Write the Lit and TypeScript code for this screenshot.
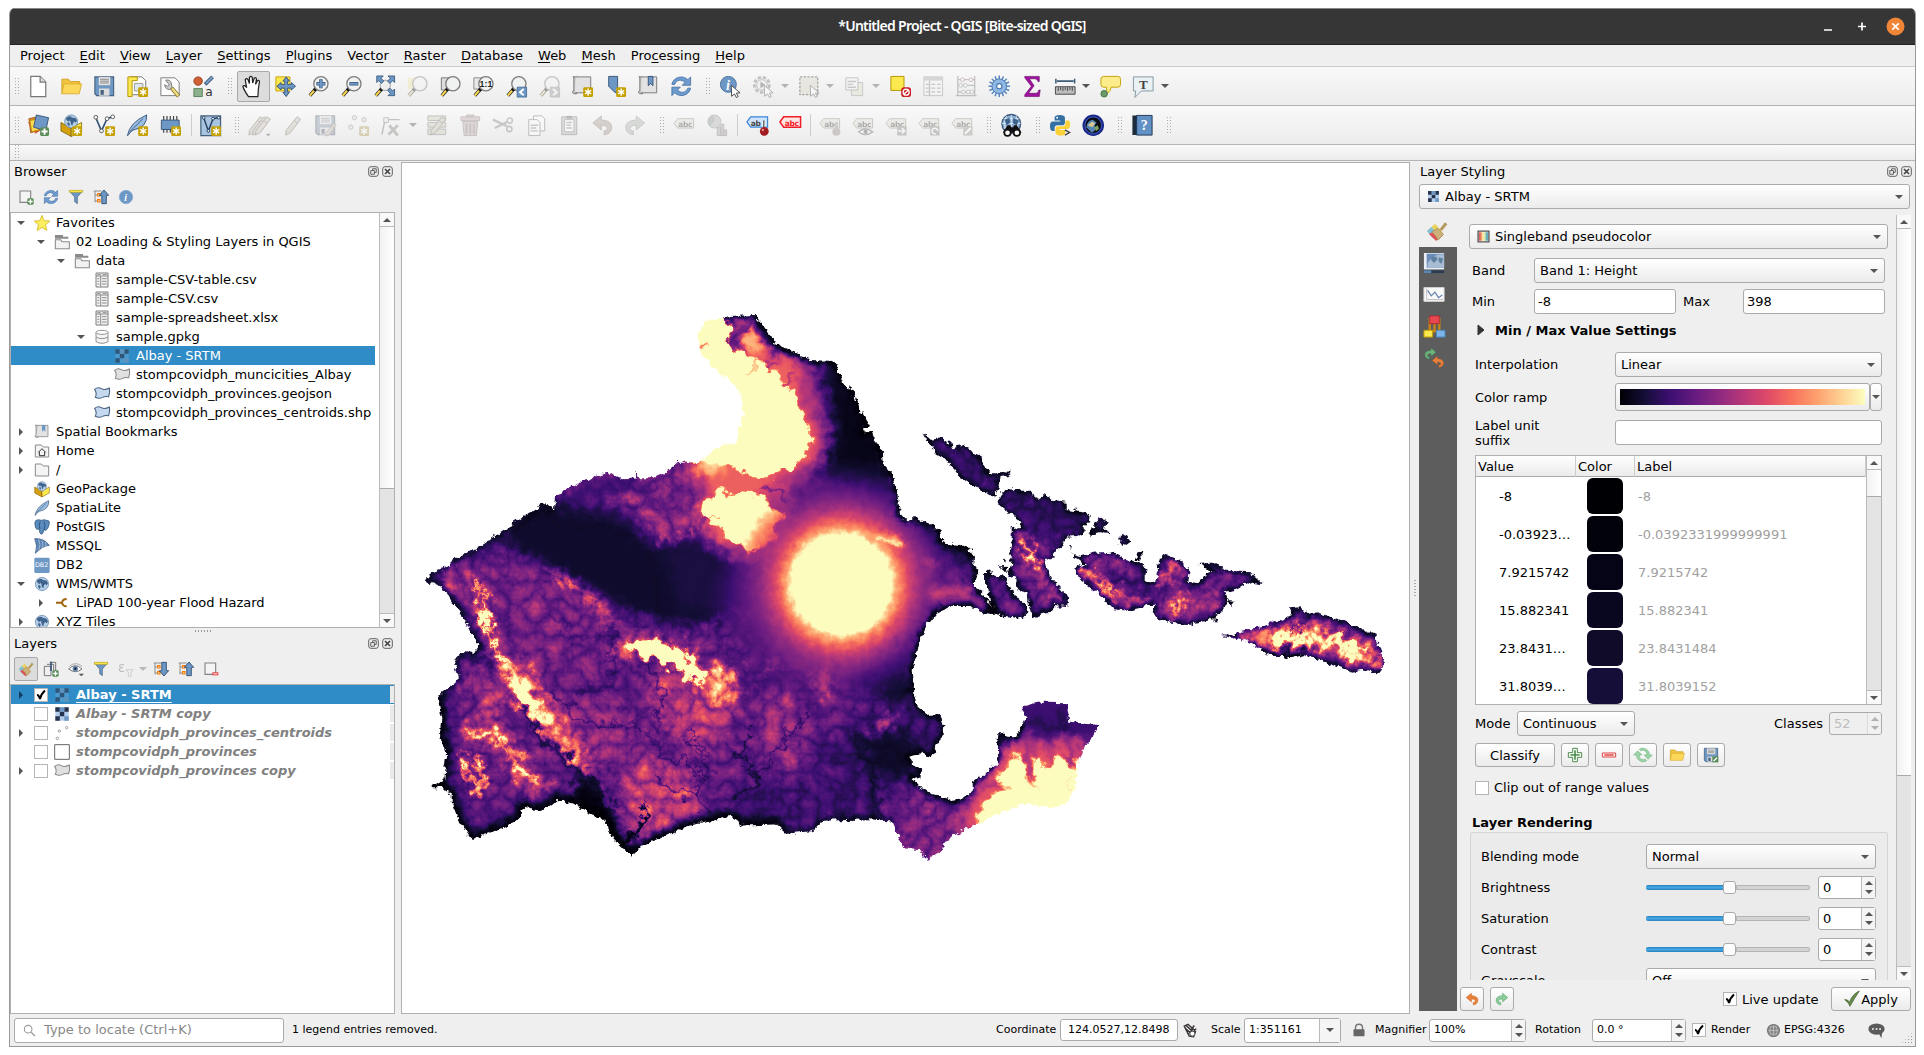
import { LitElement, html, svg, css, nothing } from "lit";
import { customElement, property } from "lit/decorators.js";

/* ---------- icons, all on a 24 unit grid ---------- */
const star = svg`<rect x="13" y="13" width="10.500" height="10.500" rx="1.500" fill="#c4a000"/><path d="M18.300 14.500v7.600M15 16.400l6.600 3.800M21.600 16.400L15 20.200" stroke="#fff" stroke-width="1.500"/>`;
const plus = svg`<rect x="14" y="14" width="9.500" height="9.500" rx="2" fill="#5a8c5a"/><path d="M18.700 15.500v6.500M15.500 18.700h6.500" stroke="#fff" stroke-width="2"/>`;
const handleYellow = svg`<path d="M9.500 14.500L3 22" stroke="#222" stroke-width="3.600"/><path d="M7.500 16.600L3 22" stroke="#fcd94f" stroke-width="2.200"/><path d="M10 14l-2 2.300" stroke="#111" stroke-width="3.600"/>`;
const lens = svg`${handleYellow}<circle cx="14.800" cy="9.300" r="7.600" fill="#f0f2f2" stroke="#7d7d7d" stroke-width="1.400"/>`;
const tag = svg`<path d="M1 10l4-5h17v10H5z" fill="#e4e0c8" stroke="#8a8668"/><text x="5.500" y="13.400" class="t9">abc</text>`;
const globe = svg`<circle cx="12" cy="12" r="10" fill="#b4cde6" stroke="#6484a8"/><path d="M5 6l4-2 4 1-1 3-3 1v3l-3-1-2-3zM14 6l5 1 2 4-2 3-2-2-2 2-1 4-2-1-1-5-2-2 1-2zM7 13l3 2-1 5-3-4z" fill="#3e638c"/>`;
const raster = (a: string, b: string, c: string) => svg`<path d="M2 2h20v20H2z" fill="${c}"/><path d="M2 2h6.700v6.700H2zM15.400 2H22v6.700h-6.600zM8.700 8.700h6.700v6.700H8.700zM2 15.400h6.700V22H2z" fill="${a}"/><path d="M8.700 2h6.700v6.700H8.700zM15.400 15.400H22V22h-6.600z" fill="${b}"/>`;
const refresh = (c: string, s: string) => svg`<path d="M2 10C3 3 13-1 19 5l3-3v9h-9l3-3C12 4 7 5 5 10z" fill="${c}" stroke="${s}" stroke-width=".8"/><path d="M22 14c-1 7-11 11-17 5l-3 3v-9h9l-3 3c4 4 9 3 11-2z" fill="${c}" stroke="${s}" stroke-width=".8"/>`;
const undo = (c: string, s: string) => svg`<path d="M2 9.500L11 2v4.500c8 0 12 4 11 9-.6 4-4 6.500-8 6.500v-4c5 0 5.500-6-3-6V17z" fill="${c}" stroke="${s}" stroke-width=".8"/>`;
const redo = (c: string, s: string) => svg`<g transform="matrix(-1 0 0 1 24 0)">${undo(c, s)}</g>`;
const disk = svg`<path d="M2 2h20v20H4l-2-2z" fill="#6d97c4" stroke="#46607d" stroke-width="1.200"/><path d="M6 2h12.500v9H6z" fill="#eee" stroke="#8795a5" stroke-width=".6"/><path d="M7.500 4.500h9.500M7.500 6.500h9.500M7.500 8.500h9.500" stroke="#777"/><path d="M6.500 14.500h11V22h-11z" fill="#ddd"/><path d="M8 16h3.500v5H8z" fill="#46607d"/>`;
const book = svg`<path d="M2 2h4v18H3.500C1 20 1 17 3 17V2z" fill="#c4c4c4" stroke="#777"/><path d="M5 2h16v17H4" fill="#e2e2e2" stroke="#777"/>`;
const folder = svg`<path d="M2 20V4.500h7l2 2.500h10v4" fill="#f0c440" stroke="#d4a020"/><path d="M2 20L4 9.500h19L20.500 20z" fill="#fcd85a" stroke="#dcae30"/>`;
const sheet = svg`<path d="M3 1.500h18v21H3z" fill="#f3f3f3" stroke="#7c7c7c" stroke-width="1.500"/><path d="M3 6h18M10 6v16M5 10h3M5 14h3M5 18h3M12 10h7M12 14h7M12 18h7M5 4h5M13 4h6" stroke="#7c7c7c" stroke-width="1.300"/>`;
const cursor = svg`<path d="M13 11l9.500 8-4 .3 2 3.700-2 1-2-3.800-3 2.500z" fill="#fff" stroke="#444"/>`;
const pencil = svg`<path d="M17 3l4 2.500L10 20l-5 2.500.5-5z" fill="#d8bfa4" stroke="#7a6a5a"/><path d="M14 7l4 3" stroke="#7a6a5a"/>`;
const funnel = svg`<path d="M2 3h20l-8 9v10l-4-3v-7z" fill="#6d97c4" stroke="#46607d"/><path d="M2 2h20v3H2z" fill="#fce94f" stroke="#c4a000" stroke-width=".8"/>`;
const poly = (a: string, s: string) => svg`<path d="M1 5q5-4 10-1t12-1q1.500 6-1 13-6-1-9 1-5 3-11 0 3-6-1-12z" fill="${a}" stroke="${s}" stroke-width="1.600"/>`;
const treeUp = (down: boolean) => svg`<path d="M3 3v17M3 9h4M3 18h4M1 3h12" stroke="#888" stroke-width="1.400" fill="none"/><path d="M7 7h3.500v3.500H7zM7 16h3.500v3.500H7z" fill="#fff" stroke="#f57900" stroke-width="1.800"/><path transform="${down ? "matrix(1 0 0 -1 0 24)" : ""}" d="M16.500 1.500l7 8h-3.500V22h-6.800V9.500H9.500z" fill="#6d97c4" stroke="#2c4a6e" stroke-width="1.300"/>`;
const brush = svg`<path d="M1 12L10 4l9 11-7 7z" fill="#e9d15c"/><path d="M1 12l5-4.500 5 6-3 7z" fill="#7fc3e0"/><path d="M3 15l6-2 5 6-3 4z" fill="#e05058"/><path d="M6 13l7-4 6 7-6 6q-2-5-7-9z" fill="#cdb07a" stroke="#9a7c48" stroke-width=".7"/><path d="M16 11l6-7.500" stroke="#b59a60" stroke-width="3.300"/>`;

const I: Record<string, unknown> = {
  none: nothing,
  doc: svg`<path d="M4 1.500h10L20 7.500v15.500H4z" fill="#fff" stroke="#777" stroke-width="1.300"/><path d="M14 1.500v6h6" fill="#ddd" stroke="#777" stroke-width="1.300"/>`,
  folder, disk, sheet, funnel, brush,
  layout: svg`<path d="M4 2h13l4 4v15H4z" fill="#fff" stroke="#777"/><path d="M2 2h10v4H6.500v17H2z" fill="#fce94f" stroke="#b39200"/><path d="M9 9h9v8H9z" fill="#dfe7ee" stroke="#999"/>${star}`,
  manager: svg`<path d="M2 3h15l4.500 4.500V22H2z" fill="#fff" stroke="#777"/><path d="M7 5.500q5-1 6 3l1 5-3 2q-4 0-5-5l3 1.500 2-1.500z" fill="#ccc" stroke="#777"/><path d="M13.500 14l7.500 8.500" stroke="#8a7430" stroke-width="4.200"/><path d="M14 14.500l6.500 7.500" stroke="#f0e080" stroke-width="2.500"/>`,
  stylemgr: svg`<circle cx="6.500" cy="6.500" r="4.500" fill="#cf5f35" stroke="#9a3f1c"/><path d="M2 14.500h9V23H2z" fill="#8bb08b" stroke="#5a805a"/><path d="M14 10l8-8" stroke="#46607d" stroke-width="4"/><path d="M15 9l7-7" stroke="#7aa2cc" stroke-width="2"/><text x="14" y="22.500" class="t13">a</text>`,
  hand: svg`<path d="M8 23q-5-7-6-11 1.500-2 4 1.500L4.500 5q1.500-2.500 3 0L9 9 9 2.500q1.700-2 3 0l.5 6 1.500-5q2-1.500 2.500.7L15.500 10l2-4q2-.8 2.200 1L18.500 15 18 23z" fill="#fff" stroke="#222" stroke-width="1.300"/>`,
  pansel: svg`<path d="M2 2h15v15H2z" fill="#fce94f" stroke="#c4a000"/><path d="M13 2l3.500 4.500h-2V10h4V8l4.500 4-4.500 4v-2h-4v4h2L13 23l-3.500-4.500h2V14h-4v2L3 12l4.500-4v2h4V6.500h-2z" fill="#6d97c4" stroke="#37557a"/>`,
  zoomin: svg`${lens}<path d="M14.800 4.500v9.600M10 9.300h9.600" stroke="#37557a" stroke-width="3.600"/><path d="M14.800 5v8.600M10.500 9.300h8.600" stroke="#6d97c4" stroke-width="2.200"/>`,
  zoomout: svg`${lens}<path d="M10 9.300h9.600" stroke="#37557a" stroke-width="3.600"/><path d="M10.500 9.300h8.600" stroke="#6d97c4" stroke-width="2"/>`,
  zoomfull: svg`${handleYellow}<circle cx="13" cy="11" r="5.500" fill="#eee" stroke="#999"/><path d="M4 1h7L8.500 3.500l3 3L9 9 6 6 4 8zM23 1h-7l2.500 2.500-3 3L18 9l3-3 2 2zM23 22h-7l2.500-2.500-3-3L18 14l3 3 2-2z" fill="#6d97c4" stroke="#37557a" stroke-width=".9"/>`,
  zoomsel: svg`<path d="M2 3h11v12H2z" fill="#fce94f"/>${lens}`,
  zoomlayer: svg`<path d="M2.500 3h11v13h-11z" fill="#ddd" stroke="#777"/>${lens}`,
  zoom11: svg`<path d="M2 3h11v12H2z" fill="#e8e8e8" stroke="#888"/>${lens}<text x="8" y="12.700" class="t10b">1:1</text>`,
  zoomlast: svg`${lens}<path d="M13 13h10v10.500H13z" fill="#6d97c4" stroke="#46709c"/><path d="M20 15l-4 3.300 4 3.300" fill="none" stroke="#fff" stroke-width="2"/>`,
  zoomnext: svg`${lens}<path d="M13 13h10v10.500H13z" fill="#999" stroke="#888"/><path d="M16 15l4 3.300-4 3.300" fill="none" stroke="#fff" stroke-width="2"/>`,
  newmap: svg`${book}${star}`,
  bookmark: svg`<path d="M5 1.500h9.500V20L11 18l-6-6z" fill="#6d97c4" stroke="#37557a"/>${star}`,
  bookmarks: svg`${book}<path d="M12 1.500h5v10L14.500 9 12 11.500z" fill="#6d97c4" stroke="#37557a"/>`,
  refresh: refresh("#6d9bd0", "#3f6a9c"),
  identify: svg`<circle cx="10" cy="10" r="8.500" fill="#6d97c4" stroke="#46709c"/><text x="7.500" y="15.500" class="i14">i</text>${cursor}`,
  action: svg`<circle cx="10.500" cy="10.500" r="8" fill="#ddd" stroke="#777" stroke-width="3" stroke-dasharray="3.500 2"/><circle cx="10.500" cy="10.500" r="5.500" fill="#eee" stroke="#777"/><path d="M9 7l5 3.500L9 14z" fill="#555"/>${cursor}`,
  select: svg`<path d="M2 2h19v19H2z" fill="#ddd8a4" stroke="#333" stroke-width="1.400" stroke-dasharray="2.500 1.500"/>${cursor}`,
  form: svg`<path d="M9 8h12v14H9z" fill="#e5e0a4" stroke="#888"/><path d="M3 3h13v13H3z" fill="#f5f5f5" stroke="#777"/><path d="M5 7h9M5 10h6M5 13h9" stroke="#888" stroke-width="1.500"/>`,
  deselect: svg`<path d="M2 1.500h14v15H2z" fill="#fce94f" stroke="#b39200"/><rect x="13" y="13" width="10.500" height="10.500" rx="3" fill="#cc2029"/><circle cx="18.300" cy="18.300" r="3.200" fill="none" stroke="#fff" stroke-width="1.400"/><path d="M16 20.500l4.500-4.500" stroke="#fff" stroke-width="1.400"/>`,
  table: svg`<path d="M2 2h20v20H2z" fill="#f6f6f6" stroke="#888"/><path d="M2 2h20v4H2z" fill="#9caab6"/><path d="M8 6v16M4 10h3M4 14h3M4 18h3M10 10h4M16 10h4M10 14h4M16 14h4M10 18h4M16 18h4" stroke="#888" stroke-width="1.500"/>`,
  abacus: svg`<path d="M3 1v21M21 1v21M1 22h22M3 5h18M3 11h18M3 18h18" stroke="#777" stroke-width="1.400"/><g fill="#fff" stroke="#b55" ><circle cx="8" cy="5" r="2"/><circle cx="17" cy="5" r="2"/></g><g fill="#fff" stroke="#777"><circle cx="6" cy="11" r="2"/><circle cx="11" cy="11" r="2"/><circle cx="9" cy="18" r="2"/><circle cx="14" cy="18" r="2"/><circle cx="18" cy="18" r="2"/></g>`,
  gear: svg`<path d="M12 .5v23M.5 12h23M4 4l16 16M20 4L4 20M7.500 1.500l9 21M16.500 1.500l-9 21M1.500 7.500l21 9M22.500 7.500l-21 9" stroke="#5a88c0" stroke-width="1.600"/><circle cx="12" cy="12" r="7.800" fill="#8fb8e4" stroke="#4a78b0"/><circle cx="12" cy="12" r="2.800" fill="#fff" stroke="#4a78b0" stroke-width="1.200"/>`,
  sigma: svg`<path d="M4 1.500h15.500V7H18q-.5-3-3-3H9l5 7.500L8 19.500h8q2.500 0 3-3.500h1.500l-1 7H4v-2l7-9L4 3z" fill="#a012a0" stroke="#5c005c" stroke-width=".6"/>`,
  measure: svg`<path d="M3 6.500h18" stroke="#3c5a78" stroke-width="2"/><path d="M2 4v5M22 4v5" stroke="#3c5a78" stroke-width="1.600"/><path d="M1.500 12.500h21v8h-21z" fill="#bbb" stroke="#444"/><path d="M4.500 13v4M7 13v3M9.500 13v4M12 13v3M14.500 13v4M17 13v3M19.500 13v4" stroke="#444"/>`,
  tip: svg`<path d="M5 1.500h15q3 0 3 3V10q0 3-3 3h-7q-1 6-6 7 2-3 1-7H5q-3 0-3-3V4.500q0-3 3-3z" fill="#fcec8c" stroke="#c4a000"/><circle cx="5.500" cy="20" r="3.500" fill="#6a9a6a" stroke="#456f45"/>`,
  textann: svg`<path d="M1.500 2h21v15H10l-7 7 1-7H1.500z" fill="#e9f1f5" stroke="#8195a0"/><text x="7.500" y="14.500" class="s14">T</text>`,
  dsm: svg`<path d="M2 5l9-2 2 14-9 3z" fill="#e08a32" stroke="#a85a10"/><path d="M1 9l8 12 6-4-7-11z" fill="#cf5b30"/><path d="M3 7l9-2 1 12-8 2z" fill="#fcd94f" stroke="#b38a10"/><path d="M10 1l13 3-3 14-13-4z" fill="#6d97c4" stroke="#37557a"/>${plus}`,
  gpkg: svg`<path d="M1 9l11 6v9L1 18z" fill="#d4a010" stroke="#7a5c00" stroke-width=".8"/><path d="M23 9l-11 6v9l11-6z" fill="#fce94f" stroke="#7a5c00" stroke-width=".8"/><g transform="translate(3.500 -.5) scale(.7)">${globe}</g>`,
  gpkgnew: svg`<path d="M1 9l11 6v9L1 18z" fill="#d4a010" stroke="#7a5c00" stroke-width=".8"/><path d="M23 9l-11 6v9l11-6z" fill="#fce94f" stroke="#7a5c00" stroke-width=".8"/><g transform="translate(3.500 -.5) scale(.7)">${globe}</g>${star}`,
  vnew: svg`<path d="M3 4l6 14 6-13 6-2" fill="none" stroke="#37557a" stroke-width="1.800"/><g fill="#fff" stroke="#555"><circle cx="3" cy="3.500" r="2"/><circle cx="9" cy="18" r="2"/><circle cx="15" cy="5" r="2"/><circle cx="21" cy="3" r="2"/></g>${star}`,
  feather: svg`<path d="M1.500 23Q4 9 22 1q1 13-14 16-3 1-6 6z" fill="#9cc0e4" stroke="#37557a"/><path d="M4 19L18 5" stroke="#37557a"/>`,
  feathernew: svg`<path d="M1.500 23Q4 9 22 1q1 13-14 16-3 1-6 6z" fill="#9cc0e4" stroke="#37557a"/><path d="M4 19L18 5" stroke="#37557a"/>${star}`,
  chip: svg`<path d="M5 2v18M8.500 2v18M12 2v18M15.500 2v18M19 2v18" stroke="#444" stroke-width="1.300"/><path d="M2.500 6.500h19v10h-19z" fill="#6d97c4" stroke="#37557a"/>${star}`,
  virt: svg`<path d="M2 2h21v21H2z" fill="#a8c4e0" stroke="#46607d" stroke-width="1.300"/><path d="M5 4l5 14 5-13 5-1" fill="none" stroke="#26405e" stroke-width="1.500"/><g fill="#dfeaf5" stroke="#26405e"><circle cx="5" cy="4" r="1.500"/><circle cx="10" cy="18" r="1.500"/><circle cx="15" cy="5" r="1.500"/><circle cx="21" cy="4" r="1.500"/></g>${star}`,
  edits: svg`<g transform="translate(-4 0)">${pencil}</g>${pencil}<g transform="translate(3 0)">${pencil}</g><path d="M19 21h5l-2.500 3z" fill="#555"/>`,
  pencil,
  saveedit: svg`${disk}<g transform="translate(9 8) scale(.7)">${pencil}</g>`,
  addpts: svg`<g fill="#ddd" stroke="#888"><circle cx="8" cy="4" r="2.300"/><circle cx="18" cy="6" r="2.300"/><circle cx="4" cy="14" r="2.300"/></g>${star}`,
  vertex: svg`<path d="M7 6h14M5 8l-3 14" stroke="#777" stroke-width="1.500"/><path d="M4 4h5v5H4z" fill="#eee" stroke="#777"/><path d="M10 12l9 11M19 12L9 22" stroke="#887" stroke-width="3"/>`,
  attredit: svg`<path d="M2 2h19v5H2zM2 9h19v5H2zM2 16h19v6H2z" fill="#d4d0a0" stroke="#777"/>${pencil}`,
  trash: svg`<path d="M4 8h16l-1.500 15h-13zM2 3h20v4H2zM8 1h8v2H8z" fill="#d8a8a8" stroke="#977"/><path d="M8 10v11M12 10v11M16 10v11" stroke="#977" stroke-width="1.500"/>`,
  cut: svg`<path d="M1 6l15 7M3 15l14-7" stroke="#888" stroke-width="2.500"/><circle cx="19" cy="7" r="2.800" fill="none" stroke="#888" stroke-width="1.700"/><circle cx="18.500" cy="16" r="2.800" fill="none" stroke="#888" stroke-width="1.700"/>`,
  copy: svg`<path d="M9 2h9l3 3v13H9z" fill="#fff" stroke="#666"/><path d="M4 6h9l3 3v14H4z" fill="#fff" stroke="#666"/><path d="M6 12h8M6 15h6M6 18h8" stroke="#888" stroke-width="1.500"/>`,
  paste: svg`<path d="M4 3h16v19H4z" fill="#bbb" stroke="#666"/><path d="M7 6h10l0 13H7z" fill="#fff" stroke="#777"/><path d="M9 2h6v3H9z" fill="#666"/><path d="M9 9h6M9 12h5M9 15h6" stroke="#888" stroke-width="1.500"/>`,
  undo: undo("#c09a88", "#806050"), redo: redo("#a8b8a8", "#708070"),
  undoc: undo("#e8803c", "#c45c1c"), redoc: redo("#8ccc9c", "#4a9c60"),
  abc: tag,
  diagram: svg`<circle cx="9" cy="8" r="7" fill="#b8b4b0" stroke="#888"/><path d="M9 8V1A7 7 0 0 0 4 13z" fill="#7a9a8a"/><path d="M12 14h4v9h-4z" fill="#98b098" stroke="#777"/><path d="M16 11h3v12h-3z" fill="#d0a0a0" stroke="#777"/><path d="M19 17h3v6h-3z" fill="#aaa" stroke="#777"/>`,
  abpin: svg`<path d="M1 8.500L5 3h18v11H5z" fill="#cfe4fc" stroke="#3a86d8" stroke-width="1.300"/><text x="5" y="12.300" class="t9">ab</text><path d="M19 8v9" stroke="#fff" stroke-width="3"/><path d="M19 7v9" stroke="#444" stroke-width="1.300"/><circle cx="19.500" cy="18.500" r="4.700" fill="#a01c20"/><circle cx="18" cy="17" r="1.300" fill="#d88"/>`,
  abcred: svg`<path d="M1 8.500L5 3h18v11H5z" fill="#ffe4e4" stroke="#ee1c24" stroke-width="1.600"/><text x="6" y="12.300" class="t9r">abc</text>`,
  lpin: svg`${tag}<circle cx="18.500" cy="19" r="4.300" fill="#a88"/><path d="M18.500 9v7" stroke="#999" stroke-width="3"/>`,
  leye: svg`${tag}<path d="M7 19q7-6 15 0-8 6-15 0z" fill="#fff" stroke="#666" stroke-width="1.500"/><circle cx="14.500" cy="19" r="2.300" fill="#555"/>`,
  lmove: svg`${tag}<path d="M13 13h10v10H13z" fill="#888"/><path d="M14 18h7M18 15l3 3-3 3" stroke="#fff" stroke-width="1.600" fill="none"/>`,
  lrot: svg`${tag}<path d="M13 13h10v10H13z" fill="#888"/><path d="M21 18a3 3 0 1 0-2 3" stroke="#fff" stroke-width="1.600" fill="none"/>`,
  ledit: svg`${tag}<path d="M13 13h10v10H13z" fill="#9a9880"/><path d="M15 21l6-6" stroke="#fff" stroke-width="2.200"/>`,
  binoc: svg`<circle cx="12" cy="10.500" r="10" fill="#8aaed4" stroke="#37557a" stroke-width="1.400"/><path d="M4 5h16M2 10h20M4 15h16M12 1v18M7 2q-4 8 0 16M17 2q4 8 0 16" stroke="#dce9f6" fill="none"/><path d="M5 6l5-2 1 5-4 3zM14 4l6 3-2 5-4-2z" fill="#3e638c"/><path d="M3 20l5-8h3l1 2h2l1-2h3l5 8z" fill="#111"/><circle cx="8" cy="20" r="3.400" fill="#fff" stroke="#111" stroke-width="1.800"/><circle cx="18" cy="20" r="3.400" fill="#fff" stroke="#111" stroke-width="1.800"/>`,
  python: svg`<path d="M11.500 1Q6 1 6 4v3h6v1H4q-3 0-3 5t3 5h2v-3q0-3 3-3h5q3 0 3-3V4q0-3-5.500-3z" fill="#3470a4"/><circle cx="8.700" cy="4" r="1" fill="#fff"/><path d="M12.500 23q5 0 5-3v-3h-6v-1h8q3 0 3-5t-3-4h-2v3q0 3-3 3H10q-3 0-3 3v4q0 3 5.500 3z" fill="#fcd038"/><path d="M17 17l5 2.800-5 2.800" stroke="#444" stroke-width="1.400" fill="none"/>`,
  earth: svg`<circle cx="12" cy="12" r="11.500" fill="#1a2a8c"/><circle cx="12" cy="12" r="8.800" fill="#0a0a14" stroke="#5a7ae0" stroke-width=".7"/><path d="M4.500 14q1-7 7-8l4 3-2 3 1 5-4 3z" fill="#5484b4"/><path d="M6 12l5-4 3 2-3 4z" fill="#d8c890"/><path d="M13 14l4-2 1 4-3 2z" fill="#7ca45c"/>`,
  help: svg`<path d="M1.500 1.500h6v21h-6z" fill="#1c2c3c"/><path d="M6 1.500h16.500v21H6z" fill="#6090c4" stroke="#1c3450"/><text x="10.500" y="17" class="q">?</text>`,
  newsq: svg`<path d="M3 3h16v17H3z" fill="#f4f4f4" stroke="#848484" stroke-width="1.700"/>${plus}`,
  remsq: svg`<path d="M3 3h16v17H3z" fill="#f4f4f4" stroke="#848484" stroke-width="1.700"/><path d="M14 17h9v4.500h-9z" fill="#e83838"/><path d="M15.500 19.300h6" stroke="#fff" stroke-width="1.500"/>`,
  info: svg`<circle cx="12" cy="12" r="10" fill="#6d97c4" stroke="#8fb0d4" stroke-width="1.500"/><text x="9.500" y="18" class="i14">i</text>`,
  up: treeUp(false), down: treeUp(true),
  star: svg`<path d="M12 .5l3.300 8 8.500.6-6.500 5.600 2 8.500L12 18.700 4.700 23.200l2-8.500L.2 9.100l8.500-.6z" fill="#fcee60" stroke="#d4b41c" stroke-width="1.200"/>`,
  dir: svg`<path d="M1.500 1.500h12v2.500h8v3h-20z" fill="#8a8a8a"/><path d="M2 22V8.500h8l2 3h11V22z" fill="#f2f2f2" stroke="#8a8a8a" stroke-width="1.600"/>`,
  dirc: svg`<path d="M2 21V3h9l3 3h8v15z" fill="#f4f4f4" stroke="#8a8a8a" stroke-width="1.500"/>`,
  home: svg`<path d="M2 21V3h9l3 3h8v15z" fill="#f4f4f4" stroke="#8a8a8a" stroke-width="1.500"/><path d="M6.500 14L12 8.500l5.500 5.500M8 13v6h8v-6" fill="none" stroke="#333" stroke-width="1.500"/>`,
  db: svg`<path d="M3 5v14q9 5 18 0V5" fill="#f4f4f4" stroke="#8a8a8a" stroke-width="1.400"/><ellipse cx="12" cy="5" rx="9" ry="3" fill="#fff" stroke="#8a8a8a" stroke-width="1.400"/><path d="M3 12q9 5 18 0" fill="none" stroke="#8a8a8a" stroke-width="1.400"/>`,
  rasterdim: raster("#2f5578", "#5d94be", "#4a9ad0"),
  raster: raster("#26334c", "#6d97c4", "#b4cdec"),
  polyg: poly("#e0e0e0", "#888"), polyb: poly("#c4d8ee", "#46607d"),
  bmk: svg`${book}<path d="M12 1.500h5v10L14.500 9 12 11.500z" fill="#6d97c4"/>`,
  pg: svg`<path d="M3 2q4-2 8 0 4-2 8 0 5 0 4 5-1 6-4 9-2 2-4 0-1 6-4 7-3-1-3-8-5 2-6-3Q0 4 3 2z" fill="#5a8cc0" stroke="#2c4a6e"/><path d="M9 4q-2 6 0 11M15 4q3 5 0 12" stroke="#2c4a6e" fill="none" stroke-width="1.300"/>`,
  ms: svg`<path d="M1 1q14-1 22 10Q13 12 2 23 6 12 1 1z" fill="#5a84b4" stroke="#37557a"/><path d="M7 2q4 8 0 16M12 4q3 6 0 11M17 6q2 4 0 7" stroke="#c4d8ee" fill="none"/>`,
  db2: svg`<rect x=".5" y="1" width="23" height="23" rx="2" fill="#6d97c4"/><text x="1.500" y="15.500" class="d2">DB2</text>`,
  globe,
  conn: svg`<path d="M3 11.500h8M19 6q-6 0-7 5.500Q13 17 19 17" stroke="#a06408" stroke-width="3" fill="none"/>`,
  addgrp: svg`<path d="M2 8h10v14H2zM6 5h10v14M10 2h9v13" fill="none" stroke="#777" stroke-width="1.500"/><path d="M12 1v14" stroke="#37557a" stroke-width="2.500"/>${plus}`,
  eye: svg`<path d="M1 12q10-10 20 0-10 8-20 0z" fill="#fff" stroke="#666" stroke-width="1.300"/><circle cx="11" cy="11.500" r="4" fill="#5a84b4"/><circle cx="11" cy="11.500" r="1.800" fill="#222"/><path d="M2 8q9-8 19 0" stroke="#888" fill="none"/><path d="M16 19h8l-4 4z" fill="#555"/>`,
  eps: svg`<text x="0" y="16" class="e20">ε</text><path d="M12 13h11l-3.500 4v6h-4v-6z" fill="#eee" stroke="#777"/>`,
  pts: svg`<g fill="#fff" stroke="#999" stroke-width="1.400"><circle cx="5" cy="20" r="1.800"/><circle cx="8" cy="9" r="1.800"/><circle cx="19" cy="4" r="1.800"/></g>`,
  sq: svg`<path d="M1 1h22v22H1z" fill="#fff" stroke="#666" stroke-width="1.500"/>`,
  pseudo: svg`<path d="M2 2h20v20H2z" fill="#fff" stroke="#555" stroke-width="2.500"/><path d="M4 4h3v16H4z" fill="#d84848"/><path d="M7 4h3v16H7z" fill="#f0a060"/><path d="M10 4h4v16h-4z" fill="#fae8a0"/><path d="M14 4h3v16h-3z" fill="#a8dca8"/><path d="M17 4h3v16h-3z" fill="#4a9cb0"/>`,
  transp: svg`<path d="M1 1h22v18H1z" fill="#e8eef4"/><path d="M4 2h19v15H4z" fill="#6a8cb8"/><path d="M5 12q8-12 18-9v14H5z" fill="#a8bcd4"/><path d="M9 5h5l2 3-4 4-3-3zM17 6l5 1-2 6-3-3z" fill="#6080a0"/><path d="M1 20h22v3H1z" fill="#2c3c50"/><path d="M1 20h8v3H1z" fill="#5a84b4"/>`,
  histo: svg`<path d="M1 5h22v15H1z" fill="#f8f8f8" stroke="#d8d8d8"/><path d="M4 6v12h18" fill="none" stroke="#bbb"/><path d="M5 8l4 6 4-4 4 6 4-3" fill="none" stroke="#6080a8" stroke-width="1.300"/>`,
  pyr: svg`<path d="M7 3v17M12 8v8M17 3v17M4 17h16" stroke="#c88418" stroke-width="2.500" fill="none"/><path d="M7 1h10v8H7z" fill="#e84850" stroke="#b42c34"/><path d="M1 16h9v7H1z" fill="#fce94f" stroke="#c4a000"/><path d="M14 16h9v7h-9z" fill="#7cb4ec" stroke="#4a84bc"/>`,
  hist: svg`<g transform="translate(1 0) scale(.6)">${redo("#6cb47c", "#3c8450")}</g><g transform="translate(9 9) scale(.6)">${undo("#e8803c", "#c45c1c")}</g>`,
  add: svg`<path d="M8.500 2h7v6.500H22v7h-6.500V22h-7v-6.500H2v-7h6.500z" fill="#fff" stroke="#4a8c4a" stroke-width="1.500"/><path d="M12 5v14M5 12h14" stroke="#4a8c4a" stroke-width="2.400"/>`,
  minus: svg`<path d="M2 9h20v6H2z" fill="#fff" stroke="#e04040" stroke-width="1.500"/><path d="M5 12h14" stroke="#e04040" stroke-width="2.200"/>`,
  swap: svg`<g transform="rotate(45 12 12)">${refresh("#9cd4a8", "#6cb47c")}</g>`,
  savefile: svg`${disk}<path d="M14 14h9v9h-9z" fill="#5a8c5a"/><path d="M16 21l5-5" stroke="#fff" stroke-width="2"/>`,
  check: svg`<path d="M1 13q5-1 7 4Q13 4 23 0 15 12 9 23 7 17 1 13z" fill="#6a8c4c" stroke="#3c5c28"/>`,
  search: svg`<circle cx="9.500" cy="9.500" r="7" fill="none" stroke="#999" stroke-width="2"/><path d="M15 15l7 7" stroke="#999" stroke-width="2.500"/>`,
  extents: svg`<path d="M2 5l6-3 12 11-3 9-7-1zM3 8l14 12M5 4l14 13M8 18l10-14M12 20l9-11" fill="none" stroke="#3a3436" stroke-width="2.300"/><circle cx="15" cy="17" r="4" fill="#fff" stroke="#444" stroke-width="1.500"/>`,
  lock: svg`<path d="M6 12V8q0-6 6-6t6 6v4" fill="none" stroke="#777" stroke-width="2.500"/><rect x="2.500" y="10.500" width="19" height="12" rx="1.500" fill="#666"/>`,
  crs: svg`<circle cx="12" cy="12" r="9.500" fill="#888"/><path d="M1 12h22M12 1v22M4 6h16M4 18h16M8 3q-4 9 0 18M16 3q4 9 0 18" stroke="#ccc" fill="none" stroke-width="1"/><circle cx="12" cy="12" r="9.500" fill="none" stroke="#777" stroke-width="2"/>`,
  bubble: svg`<ellipse cx="12" cy="10" rx="11.500" ry="8" fill="#5a5a5a"/><path d="M15 16l4 7 1-9z" fill="#5a5a5a"/><g fill="#eee"><circle cx="7" cy="10" r="1.400"/><circle cx="12" cy="10" r="1.400"/><circle cx="17" cy="10" r="1.400"/></g>`,
  float: svg`<rect x="1.500" y="1.500" width="21" height="21" rx="5" fill="none" stroke="#555" stroke-width="2"/><path d="M6 10h8v8H6zM10 10V6h8v8h-4" fill="none" stroke="#555" stroke-width="2"/>`,
  close: svg`<rect x="1.500" y="1.500" width="21" height="21" rx="5" fill="none" stroke="#555" stroke-width="2"/><path d="M6.500 6.500l11 11M17.500 6.500l-11 11" stroke="#444" stroke-width="3.600"/>`,
};
const ic = (n: string, size = 24, cls = "") =>
  html`<svg class="ic ${cls}" width=${size} height=${size} viewBox="0 0 24 24" fill="none">${I[n]}</svg>`;

/* ---------- relief raster ---------- */
type P = [number, number];
const pts = (s: string): P[] => s.trim().split(/\s+/).map((q) => q.split(",").map(Number) as P);
/* The two map sheets share one canvas; each has its own origin and scale. */
const west = (s: string): P[] => pts(s).map(([x, y]) => [410 + x / 3, 300 + y / 2.75]);
const east = (s: string): P[] => pts(s).map(([x, y]) => [880 + x / 3, 410 + y / 3]);
const d = (p: P[], close = true) => "M" + p.map(([x, y]) => `${x.toFixed(1)} ${y.toFixed(1)}`).join("L") + (close ? "Z" : "");
const g = (v: number) => { const n = Math.round((v / 1.7) * 255); return `rgb(${n},${n},${n})`; };
const area = (p: P[], v: number, b = 4, o = 1) => svg`<path d=${d(p)} fill=${g(v)} fill-opacity=${o} filter="url(#b${b})"/>`;
const line = (p: P[], v: number, w: number, b = 2, o = 1) => svg`<path d=${d(p, false)} fill="none" stroke=${g(v)} stroke-width=${w} stroke-opacity=${o} stroke-linejoin="round" stroke-linecap="round" filter="url(#b${b})"/>`;

const mainland: P[] = [
  ...west("885,55 940,50 960,44 1037,41 1050,60 1080,95 1090,118 1140,138 1205,165 1270,168 1285,190 1300,228 1328,245 1345,295 1378,345 1360,362 1385,365 1400,400 1418,415 1422,455 1445,480 1460,515 1470,590"),
  ...east("70,325 110,325 150,342 178,360 185,392 200,402 240,405 270,420 285,440 283,460 295,490 285,510 285,535 310,553 322,565 335,590 350,610 335,612 290,603 270,588 215,588 170,608 145,640 122,685 108,740 98,780 103,850 110,885 150,918 178,915 190,945 188,970 168,1010 158,1040 125,1030 85,1040 100,1060 125,1075 125,1095 95,1105 110,1125 160,1155 215,1170 250,1165 275,1145 275,1115 330,1080 352,1050 350,1010 355,972 410,980 430,940 440,920 425,905 430,888 470,878 510,878 560,880 568,935 620,942 660,945 610,1020 590,1080 585,1140 560,1180 525,1193 480,1188 440,1180 400,1190 320,1228 240,1265 190,1300 185,1322 140,1350 120,1318 70,1312 40,1240"),
  ...west("1445,1435 1380,1428 1240,1432 1210,1460 1125,1468 1095,1442 1000,1445 960,1418 900,1435 840,1445 700,1500 668,1530 610,1480 585,1430 530,1408 490,1385 440,1375 400,1405 335,1395 330,1425 240,1468 185,1485 145,1430 125,1380 125,1360 95,1340 65,1340 100,1320 108,1250 90,1200 95,1130 85,1088 150,1040 132,1000 150,968 190,970 205,950 160,870 90,785 45,768 60,750 120,730 130,712 180,695 380,572 390,555 410,560 432,580 435,540 520,495 570,482 605,475 640,490 675,488 680,475 685,490 730,490 765,475 800,448 870,445 905,415 950,396 978,395 1002,310 985,250 945,212 885,165 868,130 862,100"),
];
const islands: P[][] = [
  "127,70 150,90 180,85 212,100 215,115 245,108 265,112 280,130 300,135 315,170 330,190 350,190 365,180 392,182 385,200 362,205 355,240 342,262 300,238 260,215 235,195 210,160 165,132 145,100",
  "355,262 375,238 400,232 420,245 455,245 468,268 492,252 520,270 560,275 560,300 600,305 632,312 630,335 610,350 615,370 590,378 560,380 545,410 525,425 520,445 495,450 498,475 515,505 545,540 570,580 560,588 520,585 520,605 490,608 460,625 450,590 445,545 410,540 405,505 385,495 395,450 388,425 395,400 395,355 425,350 400,318 360,290",
  "315,485 335,480 330,495 375,500 385,520 400,555 440,580 442,610 425,627 345,612 330,575 325,540 315,520",
  "570,430 600,438 640,428 690,425 720,435 745,450 785,460 800,490 800,515 825,520 840,440 860,435 900,450 928,485 925,515 955,520 975,495 1000,485 955,465 1010,460 1030,480 1080,488 1115,490 1148,520 1110,515 1070,540 1035,545 1045,570 1030,600 985,635 920,645 850,635 818,610 825,580 790,592 740,602 700,595 660,555 600,510 583,475 615,465 600,450",
  "1025,678 1085,662 1150,650 1215,625 1235,615 1230,595 1265,592 1285,615 1310,607 1380,630 1440,655 1485,675 1502,710 1515,760 1490,793 1450,780 1415,785 1340,758 1270,735 1235,745 1210,738 1170,738 1130,710 1085,690",
  "640,340 658,322 680,335 675,355 688,378 660,370 625,375 630,358 650,352",
  "720,372 740,378 752,392 725,412 717,400", "775,425 788,425 778,448 765,448",
  "1040,570 1065,572 1055,588", "1000,625 1015,628 1010,638", "565,405 573,405 570,418", "580,293 592,293 590,300", "368,448 378,446 376,458", "360,472 385,470 380,482 362,482",
].map(east);

const coast = (p: P[], w: number, b = 3, o = 0.9) => svg`<path d=${d(p, false)} fill="none" stroke="#000" stroke-width=${w} stroke-opacity=${o} filter="url(#b${b})"/>`;
const magma = ["000004", "140e36", "3b0f70", "641a80", "8c2981", "b73779", "de4968", "f7705c", "fe9f6d", "fecf92", "fcfdbf", "fcfdbf", "fcfdbf", "fcfdbf", "fcfdbf", "fcfdbf", "fcfdbf", "fcfdbf"];
const table = (i: number) => magma.map((c) => (parseInt(c.slice(i, i + 2), 16) / 255).toFixed(3)).join(" ");
const REG = { x: 402, y: 290, w: 1007, h: 600 };
const opaque = "1 0 0 0 0 0 1 0 0 0 0 0 1 0 0 0 0 0 0 1";

const reliefMap = svg`
<defs>
  ${[1, 2, 3, 4, 6, 8, 12, 16].map((n) => svg`<filter id="b${n}" filterUnits="userSpaceOnUse" x=${REG.x} y=${REG.y} width=${REG.w} height=${REG.h} color-interpolation-filters="sRGB"><feGaussianBlur stdDeviation=${n}/></filter>`)}
  <filter id="rough" filterUnits="userSpaceOnUse" x=${REG.x} y=${REG.y} width=${REG.w} height=${REG.h} color-interpolation-filters="sRGB">
    <feTurbulence type="fractalNoise" baseFrequency=".16" numOctaves="3" seed="4"/><feColorMatrix values=${opaque} result="w"/>
    <feDisplacementMap in="SourceGraphic" in2="w" scale="8" xChannelSelector="R" yChannelSelector="G"/>
  </filter>
  <filter id="relief" filterUnits="userSpaceOnUse" x=${REG.x} y=${REG.y} width=${REG.w} height=${REG.h} color-interpolation-filters="sRGB">
    <feTurbulence type="turbulence" baseFrequency=".055" numOctaves="5" seed="23"/>
    <feColorMatrix values="0 0 0 1 0 0 0 0 1 0 0 0 0 1 0 0 0 0 0 1" result="n"/>
    <feTurbulence type="fractalNoise" baseFrequency=".1" numOctaves="4" seed="7"/><feColorMatrix values=${opaque} result="w"/>
    <feDisplacementMap in="SourceGraphic" in2="w" scale="26" xChannelSelector="R" yChannelSelector="G" result="h"/>
    <feComposite in="h" in2="n" operator="arithmetic" k1="1.100" k2=".64" k3="0" k4="0"/>
    <feColorMatrix values=${opaque}/>
  </filter>
  <filter id="edge" filterUnits="userSpaceOnUse" x=${REG.x} y=${REG.y} width=${REG.w} height=${REG.h} color-interpolation-filters="sRGB">
    <feTurbulence type="fractalNoise" baseFrequency=".09" numOctaves="3" seed="3"/><feColorMatrix values=${opaque} result="w"/>
    <feDisplacementMap in="SourceGraphic" in2="w" scale="16" xChannelSelector="R" yChannelSelector="G"/>
  </filter>
  <filter id="fray" filterUnits="userSpaceOnUse" x=${REG.x} y=${REG.y} width=${REG.w} height=${REG.h} color-interpolation-filters="sRGB">
    <feTurbulence type="fractalNoise" baseFrequency=".13" numOctaves="3" seed="9"/><feColorMatrix values=${opaque} result="w"/>
    <feDisplacementMap in="SourceGraphic" in2="w" scale="8" xChannelSelector="R" yChannelSelector="G"/>
  </filter>
  <filter id="ramp" filterUnits="userSpaceOnUse" x=${REG.x} y=${REG.y} width=${REG.w} height=${REG.h} color-interpolation-filters="sRGB">
    <feComponentTransfer><feFuncR type="table" tableValues=${table(0)}/><feFuncG type="table" tableValues=${table(2)}/><feFuncB type="table" tableValues=${table(4)}/></feComponentTransfer>
  </filter>
  <radialGradient id="cone">
    ${[[0, 1.7, 1], [0.36, 1.4, 1], [0.395, 0.98, 1], [0.43, 0.82, 1], [0.48, 0.68, 1], [0.55, 0.54, 0.97], [0.64, 0.42, 0.85], [0.78, 0.3, 0.6], [1, 0.2, 0]].map(([o, v, a]) => svg`<stop offset=${o} stop-color=${g(v)} stop-opacity=${a}/>`)}
  </radialGradient>
  <mask id="land" maskUnits="userSpaceOnUse" x=${REG.x} y=${REG.y} width=${REG.w} height=${REG.h}>
    <g fill="#fff" filter="url(#rough)"><path d=${d(mainland)}/>${islands.map((p) => svg`<path d=${d(p)}/>`)}</g>
  </mask>
</defs>
<g mask="url(#land)"><g filter="url(#ramp)">
  <g filter="url(#relief)">
    <rect x="402" y="290" width="1007" height="600" fill=${g(0.28)}/>
    ${area(west("250,690 420,730 620,870 600,1000 560,1100 420,1050 340,960 230,800"), 0.32, 8)}
    ${area(west("420,1080 620,1100 720,1240 640,1300 520,1220"), 0.36, 8)}
    ${area(west("640,1280 760,1260 850,1300 880,1380 800,1450 700,1500 640,1440"), 0.47, 8)}
    ${area(west("740,1000 1000,1050 960,1180 880,1260 780,1200 700,1100"), 0.45, 8)}
    ${area(west("1040,1090 1160,1080 1190,1200 1140,1330 1050,1270"), 0.38, 8)}
    ${area(west("960,1330 1100,1330 1280,1330 1440,1430 1000,1450"), 0.19, 8)}
    ${area(west("1200,1250 1420,1100 1600,1110 1620,1230 1440,1330 1380,1420"), 0.18, 8)}
    ${area(west("740,480 880,440 930,620 740,680 680,560"), 0.35, 6)}
    ${line(west("540,540 640,520 700,590 750,650 830,660"), 0.44, 8, 4)}
    ${line(west("740,668 800,660 850,630"), 0.72, 3, 2)}
    ${line(west("180,770 215,800 225,870 245,940 270,985 350,1030"), 0.55, 13, 6)}
    ${line(west("185,780 215,800 225,870 245,940 270,985 310,1010"), 0.95, 3, 1)}
    ${area(west("205,860 235,860 240,885 215,890"), 1.6, 2)}
    ${area(west("240,1000 330,1010 420,1100 530,1250 560,1300 460,1240 330,1130"), 0.72, 6)}
    ${line(west("285,1025 340,1080 370,1110 400,1160"), 1.3, 8, 4)}
    ${line(west("400,1150 450,1200 510,1260"), 0.9, 6, 3)}
    ${area(west("320,1050 350,1070 380,1110 350,1120 320,1085"), 1.7, 2)}
    ${line(west("130,1060 200,1040 250,1090 230,1160"), 0.48, 16, 6)}
    ${line(west("180,1190 260,1200 300,1240 330,1290 390,1340"), 0.58, 18, 6)}
    ${line(west("190,1190 260,1200 300,1240 330,1290 370,1320"), 1.05, 4, 2)}
    ${line(west("155,1250 180,1320 205,1360 225,1310 195,1265"), 0.95, 5, 2)}
    ${line(west("110,740 125,790"), 0.7, 7, 4)}
    ${line(west("430,745 500,790 560,830 590,880"), 0.55, 11, 4)}
    ${line(west("430,745 500,790 560,830"), 0.75, 3, 2)}
    ${line(west("640,955 740,945 830,985 870,1040 910,1070"), 0.6, 18, 6)}
    ${area(west("650,962 690,948 750,940 810,962 855,1005 880,1050 850,1050 800,1005 740,982 690,975"), 1.7, 2)}
    ${area(west("875,1040 930,1000 970,1015 970,1080 930,1120 885,1090"), 0.78, 4)}
    ${area(west("1200,1030 1240,1010 1270,1050 1235,1110 1215,1060"), 0.68, 4)}
    ${line(west("1395,1190 1440,1150"), 0.6, 8, 4)}
    ${line(west("1075,1020 1100,990"), 0.58, 7, 3)}
    ${line(west("890,865 930,860"), 0.65, 5, 2)}${line(west("960,845 1000,870 1030,860"), 0.58, 5, 2)}
    ${area(west("1480,1380 1600,1380 1700,1480 1600,1560 1460,1480"), 0.34, 8)}
    <!-- rivers -->
    ${line(west("420,1080 520,1160 640,1170 720,1190 770,1260 830,1270 880,1310 900,1280 830,1180"), 0.13, 2.2, 1)}
    ${line(west("890,1310 850,1360 790,1350 740,1310"), 0.1, 2.2, 1)}${line(west("850,1360 880,1400 910,1430"), 0.1, 2.2, 1)}
    ${line(west("740,1180 760,1080 700,1000"), 0.18, 3, 1)}
    ${line(west("1010,1180 1000,1260 1040,1320 990,1370"), 0.08, 3, 1)}${line(west("1040,1320 1090,1250 1190,1140"), 0.12, 2.5, 1)}
    ${line(west("330,1130 400,1210 480,1270 560,1340 600,1400"), 0.06, 5, 2)}
    ${line(west("600,900 610,980 600,1060 500,1080"), 0.13, 4, 2)}
    ${line(west("420,860 480,920 590,930"), 0.15, 3, 2)}
    ${line(west("700,1400 700,1440 640,1500"), 0.03, 5, 1)}
    ${area(west("500,1290 580,1350 610,1430 650,1530 560,1450 480,1390"), 0.03, 4)}
    ${line(west("120,900 200,960 270,1030 300,1060"), 0.08, 6, 4)}
    ${line(west("1340,1200 1390,1320 1400,1430"), 0.08, 8, 3)}
    <!-- coast islands of the east -->
    ${area(east("120,60 400,180 400,270 120,150"), 0.17, 4)}
    ${area(east("350,230 640,290 620,390 400,380"), 0.17, 4)}
    ${line(east("410,380 445,420 470,470 520,540 550,570"), 0.5, 9, 4)}
    ${line(east("425,400 450,430 475,470"), 1.2, 3.5, 2)}
    ${area(east("310,480 450,570 440,630 320,600"), 0.25, 4)}
    ${line(east("600,485 680,535 740,575 800,575"), 0.56, 9, 3)}${line(east("610,485 640,495"), 0.9, 4, 2)}${line(east("660,525 690,540"), 0.95, 4, 2)}
    ${line(east("630,440 720,460 770,490"), 0.4, 6, 3)}
    ${line(east("850,510 885,470"), 0.75, 10, 4)}
    ${line(east("850,605 900,600 960,570 1000,570"), 0.48, 16, 6)}
    ${line(east("890,600 910,560"), 1.15, 6, 3)}
    ${line(east("965,470 1040,500 1130,510"), 0.3, 6, 2)}
    ${line(east("700,500 800,540 850,545"), 0.17, 8, 3)}
    ${line(east("1060,675 1200,680 1330,680 1480,750"), 0.7, 24, 4)}
    ${line(east("1180,690 1240,680 1320,690 1380,690 1400,720 1440,745"), 1.3, 8, 3)}
    ${line(east("1300,630 1400,680 1490,735"), 0.4, 3, 1)}
    ${line(east("1285,620 1240,660"), 0.2, 3, 1)}
    ${area(east("1195,730 1210,715 1270,715 1260,750"), 0.03, 3)}
  </g>
  <g filter="url(#edge)">
    ${area(west("260,660 400,550 500,580 640,600 730,680 860,665 980,740 1000,830 920,890 760,890 640,850 420,735"), 0.08, 6)}
    ${area(west("760,680 870,670 1000,750 1000,850 800,860"), 0.13, 8, 0.8)}
    ${area(west("420,550 600,560 700,640 600,600 450,600"), 0.1, 4, 0.7)}
    ${area(west("450,540 600,490 690,500 620,540 500,560"), 0.16, 4, 0.75)}
    ${area(west("1230,170 1275,160 1400,340 1480,590 1700,620 1750,720 1640,720 1500,640 1390,560 1230,500 1270,380 1250,240"), 0.04, 8)}
    ${area(west("1200,520 1400,520 1480,620 1350,620 1150,590"), 0.2, 8, 0.8)}
    ${area(west("1600,800 1520,940 1500,1060 1520,1120 1380,1080 1300,1040 1380,980 1480,900"), 0.03, 8)}
    ${area(west("1000,720 1100,720 1140,960 1060,960 920,860"), 0.24, 12, 0.8)}
    ${area(west("1370,1190 1480,1180 1540,1260 1480,1330 1380,1280"), 0.05, 6, 0.8)}
    <!-- northern peninsula and its southern hill -->
    ${area(west("820,430 870,400 950,380 1000,40 1040,40 1100,140 1200,180 1215,300 1250,380 1230,440 1190,500 1130,530 1140,640 1080,710 960,700 880,640 850,600 880,520 840,490"), 0.5, 6)}
    ${area(west("860,450 960,440 1150,500 1130,640 1060,720 950,690 860,590 900,520"), 0.66, 4)}
    ${area(west("990,40 1100,110 1170,190 1160,260 1215,340 1220,420 1150,480 1080,490"), 0.66, 4)}
    ${area(west("840,20 930,40 965,70 950,120 1000,150 1080,185 1130,240 1165,290 1195,360 1195,410 1140,465 1050,490 970,455 885,455 880,440 700,400 850,250"), 1.7, 1)}
    ${area(west("875,590 900,550 935,515 955,540 1010,535 1060,545 1110,585 1095,660 1030,692 985,675 935,625 885,600"), 1.7, 1)}
    ${area(west("1000,80 1060,110 1040,150 1000,130"), 0.85, 3)}
    ${line(west("1080,160 1010,195"), 0.4, 4, 2)}${line(west("1020,60 970,115"), 0.22, 5, 2)}${line(west("865,130 900,130"), 0.4, 5, 2)}
    ${line(west("895,180 950,190"), 0.35, 3, 2)}
    ${line(west("1100,170 1060,185"), 0.4, 3, 1)}${line(west("1150,200 1120,230"), 0.45, 3, 1)}
    ${area(west("1030,40 1060,40 1100,110 1180,150 1130,160 1060,120"), 0.1, 4)}
    ${area(west("870,430 950,440 940,475 850,480"), 0.88, 4)}
    ${line(west("1130,560 1120,530 1060,515"), 0.25, 2, 1)}${line(west("860,640 880,605 930,590"), 0.3, 2, 1)}
    <!-- south-east cape -->
    ${area(east("300,1100 360,1000 560,940 620,960 600,1080 590,1200 280,1290 240,1230"), 0.62, 6)}
    ${area(east("350,960 440,870 670,860 670,950 620,1000 560,980 480,1000 420,970 350,1040"), 0.2, 6)}
    ${area(east("300,1240 310,1190 345,1160 400,1150 350,1110 400,1040 435,1050 440,1110 470,1110 460,1050 500,1080 540,1035 570,1080 600,1050 600,1220 380,1250 290,1260"), 1.7, 2)}
    ${line(east("445,970 445,1110 480,1130"), 0.4, 6, 3)}${line(east("560,960 575,1050 580,1090"), 0.35, 4, 2)}${line(east("300,1125 380,1120 400,1140"), 0.42, 4, 2)}
    ${line(east("575,1100 565,1170"), 0.8, 6, 2)}${line(east("510,1010 512,1060"), 0.45, 3, 2)}
    ${line(east("540,900 560,960 500,950 450,930"), 0.1, 3, 2)}
  </g>
  <g filter="url(#fray)">
    <circle cx="841.500" cy="584" r="129" fill="url(#cone)"/>
    ${area(west("1170,250 1220,260 1240,330 1210,340"), 0.55, 8, 0.8)}
    ${line(west("1370,650 1430,650 1475,672"), 0.8, 7, 2)}${line(west("1400,655 1475,672"), 1.0, 3, 1)}
    ${line(east("160,550 260,550"), 0.65, 9, 4)}${line(east("210,570 320,585"), 0.42, 10, 4)}${line(east("135,450 160,465"), 0.5, 5, 2)}
    ${coast(mainland.slice(1, 75), 7, 2)}
    ${coast(mainland.slice(100, 148), 8, 3, 0.8)}${coast(mainland.slice(104, 132), 12, 4)}
    ${islands.map((p) => coast([...p, p[0]], 5, 2, 0.9))}
  </g>
</g></g>`;

/* ---------- form controls ---------- */
const combo = (text: unknown, w = "", icon = "") =>
  html`<div class="combo" style=${w ? `width:${w}` : nothing}>${icon ? ic(icon, 13) : nothing}<span class="grow">${text}</span><i class="dn"></i></div>`;
const spin = (text: string, w: number, cls = "") =>
  html`<div class="spin ${cls}" style="width:${w}px"><span class="grow">${text}</span><div class="updn"><i class="up"></i><i class="dn"></i></div></div>`;
const check = (on: boolean) => html`<span class="chk">${on ? html`<svg width="12" height="12" viewBox="0 0 12 12"><path d="M2 6q2 0 3 4Q6 5 10 1.500" fill="none" stroke="#000" stroke-width="2"/></svg>` : nothing}</span>`;

interface Node { l: number; open?: boolean | null; icon: string; t: string; sel?: boolean; }
const N = (l: number, open: boolean | null, icon: string, t: string, sel = false): Node => ({ l, open, icon, t, sel });
const browser: Node[] = [
  N(0, true, "star", "Favorites"), N(1, true, "dir", "02 Loading & Styling Layers in QGIS"), N(2, true, "dir", "data"),
  N(3, null, "sheet", "sample-CSV-table.csv"), N(3, null, "sheet", "sample-CSV.csv"), N(3, null, "sheet", "sample-spreadsheet.xlsx"),
  N(3, true, "db", "sample.gpkg"), N(4, null, "rasterdim", "Albay - SRTM", true), N(4, null, "polyg", "stompcovidph_muncicities_Albay"),
  N(3, null, "polyb", "stompcovidph_provinces.geojson"), N(3, null, "polyb", "stompcovidph_provinces_centroids.shp"),
  N(0, false, "bmk", "Spatial Bookmarks"), N(0, false, "home", "Home"), N(0, false, "dirc", "/"), N(0, null, "gpkg", "GeoPackage"),
  N(0, null, "feather", "SpatiaLite"), N(0, null, "pg", "PostGIS"), N(0, null, "ms", "MSSQL"), N(0, null, "db2", "DB2"),
  N(0, true, "globe", "WMS/WMTS"), N(1, false, "conn", "LiPAD 100-year Flood Hazard"), N(0, false, "globe", "XYZ Tiles"),
];
const layers: [boolean, boolean, string, string][] = [
  [true, true, "rasterdim", "Albay - SRTM"], [false, false, "raster", "Albay - SRTM copy"], [true, false, "pts", "stompcovidph_provinces_centroids"],
  [false, false, "sq", "stompcovidph_provinces"], [true, false, "polyg", "stompcovidph_provinces copy"],
];
const menus: [string, number][] = [["Project", 3], ["Edit", 0], ["View", 0], ["Layer", 0], ["Settings", 0], ["Plugins", 0], ["Vector", 4], ["Raster", 0], ["Database", 0], ["Web", 0], ["Mesh", 0], ["Processing", 3], ["Help", 0]];
/* "|" grip, "!" separator, "v" menu arrow; a leading "-" marks a disabled action, "*" a checked one */
const row1 = "| doc folder disk layout manager stylemgr | *hand pansel zoomin zoomout zoomfull -zoomsel zoomlayer zoom11 zoomlast -zoomnext newmap bookmark bookmarks refresh | identify -action -v -select -v -form -v deselect -table -abacus gear sigma measure v tip textann v";
const row2 = "| dsm gpkgnew vnew feathernew chip ! virt | -edits -pencil -saveedit -addpts -vertex -v -attredit -trash -cut -copy -paste -undo -redo | -abc -diagram ! abpin abcred ! -lpin -leye -lmove -lrot -ledit | binoc | python earth | help |";
const classes: [string, string, string][] = [
  ["-8", "#000004", "-8"], ["-0.03923…", "#02020b", "-0.0392331999999991"], ["7.9215742", "#050416", "7.9215742"],
  ["15.882341", "#090720", "15.882341"], ["23.8431…", "#0f0b29", "23.8431484"], ["31.8039…", "#150e38", "31.8039152"],
];

const shared = css`
  * { box-sizing: border-box; }
  :host { display: block; font: 13px/19px "DejaVu Sans", sans-serif; color: #000; }
  .ic { display: block; flex: none; overflow: visible; }
  .t9 { font: bold 8px "DejaVu Sans", sans-serif; fill: #444; letter-spacing: -.3px; }
  .t9r { font: bold 8px "DejaVu Sans", sans-serif; fill: #ee1c24; letter-spacing: -.3px; }
  .t10b { font: bold 9.5px "Liberation Sans", sans-serif; fill: #222; }
  .t13 { font: 13px "DejaVu Sans", sans-serif; fill: #333; }
  .i14 { font: italic bold 15px "Liberation Serif", serif; fill: #fff; }
  .s14 { font: bold 14px "Liberation Serif", serif; fill: #444; }
  .q { font: bold 15px "Liberation Serif", serif; fill: #fff; }
  .d2 { font: 9.5px "DejaVu Sans", sans-serif; fill: #fff; }
  .e20 { font: 20px "DejaVu Sans", sans-serif; fill: #777; }
  .off { opacity: .4; filter: saturate(.4); }
  .up, .dn, .rt { display: block; flex: none; width: 0; height: 0; border: 4px solid transparent; }
  .dn { border-top: 4.5px solid #555; border-bottom: 0; }
  .up { border-bottom: 4.5px solid #555; border-top: 0; }
  .rt { border-left: 4.5px solid #555; border-right: 0; }
  .grow { flex: 1; white-space: nowrap; overflow: hidden; }
  .sb { display: flex; flex-direction: column; width: 15px; border-left: 1px solid #bbb; background: #e4e4e4; }
  .sb b { height: 14px; display: grid; place-items: center; background: #f9f9f9; border-bottom: 1px solid #bbb; flex: none; }
  .sb b:last-child { border: 0; border-top: 1px solid #bbb; margin-top: auto; }
  .sb u { display: block; background: linear-gradient(90deg, #f2f2f2, #fff); border-bottom: 1px solid #aaa; }
  .title { display: flex; align-items: center; padding: 0 2px 0 4px; gap: 3px; height: 21px; }
  .chk { display: grid; place-items: center; flex: none; width: 14px; height: 14px; background: #fff; border: 1px solid #b5b5b5; }
`;

@customElement("tool-row")
class ToolRow extends LitElement {
  @property() items = "";
  static styles = [shared, css`
    :host { display: flex; align-items: center; height: 100%; padding-left: .7px; }
    .s { width: 33px; display: grid; place-items: center; flex: none; }
    .s .ic { margin-left: -1px; }
    .on { width: 33px; height: 31px; background: #dcdcdc; border: 1px solid #a8a8a8; border-radius: 2px; }
    .grip { width: 16px; height: 18px; flex: none; display: flex; justify-content: center; padding-left: 3px; }
    .grip::before { content: ""; width: 6px; background: radial-gradient(circle, #aaa 0.8px, transparent 1px) 0 0 / 3px 3px; }
    .grip:first-child { width: 12px; padding-left: 1px; }
    .sep { width: 7px; height: 22px; display: flex; justify-content: center; flex: none; }
    .sep::before { content: ""; width: 1px; background: #ccc; }
    .v { width: 12.5px; flex: none; display: grid; place-items: center start; }
    .dim { opacity: .4; }
  `];
  render() {
    return this.items.split(" ").map((k) => {
      if (k === "|") return html`<div class="grip"></div>`;
      if (k === "!") return html`<div class="sep"></div>`;
      const off = k[0] === "-", on = k[0] === "*", n = off || on ? k.slice(1) : k;
      if (n === "v") return html`<div class="v ${off ? "dim" : ""}"><i class="dn"></i></div>`;
      return html`<div class="s ${on ? "on" : ""}">${ic(n, 22.5, off ? "off" : "")}</div>`;
    });
  }
}

@customElement("app-root")
class AppRoot extends LitElement {
  static styles = [shared, css`
    :host { background: #fff; height: 1055px; width: 1924px; padding: 8px 0 0 9px; overflow: hidden; }
    .win { width: 1907px; height: 1039px; border: 1px solid #999; border-top: 0; border-radius: 6px 6px 0 0; background: #efefef; display: grid; grid-template-rows: 37px 22px 39px 39px 16px 853px 32px; overflow: hidden; }
    .bar { background: #363636; border-top: 1px solid #888; border-bottom: 1px solid #222; color: #fff; display: grid; grid-template-columns: 1fr auto 1fr; align-items: center; font: 600 14px/20px "Noto Sans", sans-serif; }
    .bar .name { grid-column: 2; letter-spacing: -.71px; padding: 0 1px 2px 0; white-space: nowrap; }
    .bar svg { justify-self: end; margin: 0 10px 1px 0; }
    .menu { display: flex; gap: 15.1px; padding: 0 0 1px 10px; border-bottom: 1px solid #ccc; align-items: center; }
    .menu u { text-underline-offset: 2px; }
    .tb { background: linear-gradient(#f9f9f9, #ececec); border-bottom: 1px solid #b4b4b4; }
    .main { display: grid; grid-template-columns: 385px 6px 1009px 9px 493px; }
    .col { display: flex; flex-direction: column; }
    .tools { display: flex; align-items: center; gap: 9px; padding-left: 8px; }
    .t1 { height: 30px; padding-bottom: 1px; }
    .t2 { height: 30px; padding-left: 4px; gap: 9px; padding-bottom: 1px; }
    .pressed { width: 24px; height: 24px; display: grid; place-items: center; background: #dcdcdc; border: 1px solid #a8a8a8; border-radius: 2px; margin-right: -4px; }
    .box { background: #fff; border: 1px solid #b0b0b0; display: flex; overflow: hidden; }
    .tree { flex: 1; overflow: hidden; padding-right: 4px; }
    .r { display: flex; align-items: center; height: 19px; white-space: nowrap; }
    .r .tw { width: 20px; display: grid; place-items: center; flex: none; margin-right: 3px; }
    .r .ic { margin-right: 6px; }
    .sel { background: #308cc6; color: #fff; }
    .split { height: 5px; display: grid; place-items: center; }
    .split::before { content: ""; width: 18px; height: 2px; background: radial-gradient(circle, #999 .8px, transparent 1px) 0 0 / 3px 2px; }
    .lay { font-weight: bold; font-style: italic; color: #808080; }
    .lay .chk { margin-right: 6px; }
    .lay.sel { color: #fff; font-style: normal; text-decoration: underline; text-underline-offset: 3px; }
    .lay.sel .rt { border-left-color: #0f3d60; }
    .lay::after { content: ""; width: 4px; height: 17px; background: #eaeaea; margin-left: auto; }
    .mapbox { background: #fff; border: 1px solid #b0b0b0; margin-top: 1px; overflow: hidden; }
    .mapbox svg { display: block; }
    .vs { display: grid; place-items: center; }
    .vs::before { content: ""; width: 2px; height: 18px; background: radial-gradient(circle, #aaa .8px, transparent 1px) 0 0 / 2px 3px; }
    .combo { display: flex; align-items: center; gap: 5px; height: 25px; padding: 0 6px 0 5px; background: linear-gradient(#fff, #ebebeb); border: 1px solid #aaa; border-radius: 3px; }
    .combo .ic { margin-left: 2px; }
    .inp { height: 25px; background: #fff; border: 1px solid #aaa; border-radius: 3px; padding: 2px 3px; white-space: nowrap; }
    .spin { display: flex; height: 23px; align-items: center; background: #fff; border: 1px solid #aaa; border-radius: 3px; padding-left: 4px; }
    .spin .updn { width: 14px; height: 100%; border-left: 1px solid #bbb; background: #f5f5f5; display: flex; flex-direction: column; align-items: center; justify-content: center; gap: 5px; }
    .dis { background: #efefef; color: #bebebe; }
    .dis .updn { opacity: .4; }
    .sty { display: grid; grid-template-columns: 38px 1fr; height: 799px; }
    .tabs { background: linear-gradient(#efefef 32px, #5d5d5d 32px); margin-top: 6px; padding-top: 5px; display: flex; flex-direction: column; align-items: center; padding-right: 8px; height: 796px; }
    .tabs .ic { margin-bottom: 9.6px; }
    .tabs .ic:first-child { margin-left: 5px; }
    .scr { display: grid; grid-template-columns: 439px 15px; height: 765px; overflow: hidden; }
    .body { padding-left: 12px; height: 765px; overflow: hidden; }
    .row { display: flex; align-items: center; }
    .btn { border: 1px solid #aaa; border-radius: 3px; background: linear-gradient(#fff, #ebebeb); display: flex; align-items: center; justify-content: center; height: 24px; flex: none; }
    .rampbox { height: 28px; width: 255px; padding: 5px 4px; background: linear-gradient(#fff, #ebebeb); border: 1px solid #aaa; border-radius: 3px; }
    .ramp { height: 16px; background: linear-gradient(90deg, #000004, #140e36 10%, #3b0f70 20%, #641a80 30%, #8c2981 40%, #b73779 50%, #de4968 60%, #f7705c 70%, #fe9f6d 80%, #fecf92 90%, #fcfdbf); }
    .tbl { width: 407px; height: 250px; margin: 7px 0 0 6px; }
    .tbl .sb { width: 15px; }
    .th { display: grid; grid-template-columns: 100px 59px 1fr; height: 21px; background: linear-gradient(#fff, #ebebeb); border-bottom: 1px solid #aaa; }
    .th span { padding-left: 2px; border-right: 1px solid #ccc; line-height: 21px; }
    .td { display: grid; grid-template-columns: 100px 59px 1fr; height: 38px; align-items: center; white-space: nowrap; }
    .td i { width: 36px; height: 36px; border-radius: 6px; margin-left: 11px; }
    .td span:first-child { padding-left: 23px; }
    .td span:last-child { color: #a0a0a0; padding-left: 3px; }
    .gb { margin: 0 8px 0 1px; border: 1px solid #d4d4d4; background: #ebebeb; border-radius: 2px; padding: 11px 11px 0 10px; height: 200px; }
    .gb .row { height: 25px; margin-bottom: 6px; }
    .gb .lb { width: 165px; flex: none; }
    .slider { width: 164px; height: 13px; margin-right: 8px; display: flex; align-items: center; }
    .slider b { height: 5px; width: 77px; background: linear-gradient(#2a7fba, #45a9e8, #2a7fba); border-radius: 2px 0 0 2px; }
    .slider i { width: 13px; height: 13px; background: #fcfcfc; border: 1px solid #aaa; border-radius: 3px; }
    .slider s { flex: 1; height: 5px; border: 1px solid #b4b4b4; background: #d4d4d4; border-radius: 0 2px 2px 0; }
    .foot { display: flex; align-items: center; padding: 7px 0 0 3px; }
    .status { display: flex; align-items: center; font-size: 11px; line-height: 18px; padding: 0 0 0 4px; white-space: nowrap; position: relative; }
    .locate { display: flex; align-items: center; gap: 8px; padding: 0 8px; width: 270px; font-size: 13px; color: #888; }
    .cc { display: flex; height: 25px; width: 97px; background: #fff; border: 1px solid #aaa; border-radius: 3px; align-items: center; padding-left: 4px; }
    .cc b { width: 21px; height: 100%; border-left: 1px solid #bbb; background: #f5f5f5; display: grid; place-items: center; }
    .grip2 { position: absolute; right: 2px; bottom: 2px; width: 12px; height: 12px; background: radial-gradient(circle, #999 .8px, transparent 1px) 0 0 / 3px 3px; clip-path: polygon(100% 0, 100% 100%, 0 100%); }
    .rp .title { padding: 0 0 0 1px; }
  `];

  title2(t: string) { return html`<div class="title"><span class="grow">${t}</span>${ic("float", 11)}${ic("close", 11)}</div>`; }

  styling() {
    return html`
      ${this.title2("Layer Styling")}
      <div style="margin-top:2px">${combo("Albay - SRTM", "491px", "raster")}</div>
      <div class="sty">
        <div class="tabs">${ic("brush", 22)}${ic("transp", 22)}${ic("histo", 22)}${ic("pyr", 23)}${ic("hist", 22)}</div>
        <div style="padding-top:6px">
          <div class="scr">
            <div class="body">
              <div style="margin-top:9px">${combo("Singleband pseudocolor", "419px", "pseudo")}</div>
              <div class="row" style="margin:9px 0 0 3px"><span style="width:62px">Band</span>${combo("Band 1: Height", "351px")}</div>
              <div class="row" style="margin:6px 0 0 3px"><span style="width:62px">Min</span><div class="inp" style="width:142px">-8</div><span style="width:67px;padding-left:7px">Max</span><div class="inp" style="width:142px">398</div></div>
              <div class="row" style="height:32px;padding-left:8px;gap:10px;font-weight:bold"><svg width="8" height="12"><path d="M1 1l6 5-6 5z" fill="#333" stroke="#333"/></svg>Min / Max Value Settings</div>
              <div class="row" style="margin:6px 0 0 6px"><span style="width:140px">Interpolation</span>${combo("Linear", "267px")}</div>
              <div class="row" style="margin:6px 0 0 6px"><span style="width:140px">Color ramp</span><div class="rampbox"><div class="ramp"></div></div><div class="btn" style="width:12px;height:28px"><i class="dn"></i></div></div>
              <div class="row" style="margin:6px 0 0 6px;height:31px"><span style="width:140px;line-height:15px;padding-right:60px">Label unit suffix</span><div class="inp" style="width:267px"></div></div>
              <div class="box tbl"><div style="flex:1">
                <div class="th"><span>Value</span><span>Color</span><span>Label</span></div>
                ${classes.map(([v, c, l]) => html`<div class="td"><span>${v}</span><i style="background:${c}"></i><span>${l}</span></div>`)}
              </div><div class="sb"><b><i class="up"></i></b><u style="height:27px"></u><b><i class="dn"></i></b></div></div>
              <div class="row" style="margin:6px 0 0 6px"><span style="width:42px">Mode</span>${combo("Continuous", "118px")}<span style="margin-left:139px;width:55px">Classes</span>${spin("52", 53, "dis")}</div>
              <div class="row" style="margin:7px 0 0 6px;gap:6.3px"><div class="btn" style="width:80px">Classify</div>${["add", "minus", "swap", "folder", "savefile"].map((n) => html`<div class="btn" style="width:27.700px">${ic(n, 16)}</div>`)}</div>
              <div class="row" style="margin:11px 0 0 6px;gap:5px">${check(false)}<span>Clip out of range values</span></div>
              <div class="row" style="margin:15px 0 0 3px;height:20px;font-weight:bold">Layer Rendering</div>
              <div class="gb">
                <div class="row"><span class="lb">Blending mode</span>${combo("Normal", "230px")}</div>
                ${["Brightness", "Saturation", "Contrast"].map((n) => html`<div class="row"><span class="lb">${n}</span><div class="slider"><b></b><i></i><s></s></div>${spin("0", 58)}</div>`)}
                <div class="row"><span class="lb">Grayscale</span>${combo("Off", "230px")}</div>
              </div>
            </div>
            <div class="sb"><b><i class="up"></i></b><u style="height:547px"></u><b><i class="dn"></i></b></div>
          </div>
          <div class="foot"><div class="btn" style="width:24px;margin-right:6px">${ic("undoc", 14)}</div><div class="btn" style="width:24px">${ic("redoc", 14)}</div>
            <div class="row" style="margin-left:209px;gap:5px">${check(true)}<span style="width:89px">Live update</span></div>
            <div class="btn" style="width:80px;gap:1px">${ic("check", 16)}Apply</div></div>
        </div>
      </div>`;
  }

  render() {
    return html`<div class="win">
      <div class="bar"><span class="name">*Untitled Project - QGIS [Bite-sized QGIS]</span>
        <svg width="90" height="22" viewBox="0 0 90 22"><path d="M9 15h8M43 11.500h8M47 7.500v8" stroke="#fff" stroke-width="1.700"/><circle cx="80.500" cy="11.500" r="9" fill="#f08437"/><path d="M77.300 8.300l6.400 6.400M83.700 8.300l-6.400 6.400" stroke="#fff" stroke-width="1.700"/></svg></div>
      <div class="menu">${menus.map(([m, i]) => html`<span>${m.slice(0, i)}<u>${m[i]}</u>${m.slice(i + 1)}</span>`)}</div>
      <div class="tb"><tool-row items=${row1}></tool-row></div>
      <div class="tb"><tool-row items=${row2}></tool-row></div>
      <div class="tb"><tool-row items="|"></tool-row></div>
      <div class="main">
        <div class="col">
          ${this.title2("Browser")}
          <div class="tools t1">${["newsq", "refresh", "funnel", "up", "info"].map((n) => ic(n, 16))}</div>
          <div class="box" style="height:416px"><div class="tree">${browser.map((n) => html`<div class="r ${n.sel ? "sel" : ""}" style="padding-left:${n.l * 20}px"><span class="tw">${n.open === null ? nothing : html`<i class=${n.open ? "dn" : "rt"}></i>`}</span>${ic(n.icon, 16)}${n.t}</div>`)}</div>
            <div class="sb"><b><i class="up"></i></b><u style="height:262px"></u><b><i class="dn"></i></b></div></div>
          <div class="split"></div>
          ${this.title2("Layers")}
          <div class="tools t2"><span class="pressed">${ic("brush", 16)}</span>${["addgrp", "eye", "funnel"].map((n) => ic(n, 16))}${ic("eps", 16, "off")}<i class="dn" style="opacity:.35;margin:0 -3px 0 -4px"></i>${["down", "up", "remsq"].map((n) => ic(n, 16))}</div>
          <div class="box" style="height:330px"><div class="tree" style="padding:0">${layers.map(([ex, on, icon, t]) => html`<div class="r lay ${on ? "sel" : ""}"><span class="tw">${ex ? html`<i class="rt"></i>` : nothing}</span>${check(on)}${ic(icon, 16)}${t}</div>`)}</div></div>
        </div>
        <div></div>
        <div class="mapbox"><svg width="1007" height="850" viewBox="402 163 1007 850">${reliefMap}</svg></div>
        <div class="vs"></div>
        <div class="col rp">${this.styling()}</div>
      </div>
      <div class="status">
        <div class="inp locate">${ic("search", 13)}<span>Type to locate (Ctrl+K)</span></div>
        <span style="margin-left:8px;width:704px">1 legend entries removed.</span>
        <span style="width:64px">Coordinate</span><div class="inp" style="width:118px;height:22px;padding:1px 7px">124.0527,12.8498</div>
        <span style="margin:0 13px 0 5px">${ic("extents", 15)}</span>
        <span style="width:33px">Scale</span><div class="cc"><span class="grow">1:351161</span><b><i class="dn"></i></b></div>
        <span style="margin:0 9px 0 11px">${ic("lock", 14)}</span>
        <span style="width:54px">Magnifier</span>${spin("100%", 97)}
        <span style="margin-left:9px;width:57px">Rotation</span>${spin("0.0 °", 94)}
        <span style="margin:0 5px 0 6px">${check(true)}</span><span style="width:55px">Render</span>
        ${ic("crs", 15)}<span style="margin-left:3px;width:84px">EPSG:4326</span>${ic("bubble", 17)}
        <i class="grip2"></i>
      </div>
    </div>`;
  }
}
